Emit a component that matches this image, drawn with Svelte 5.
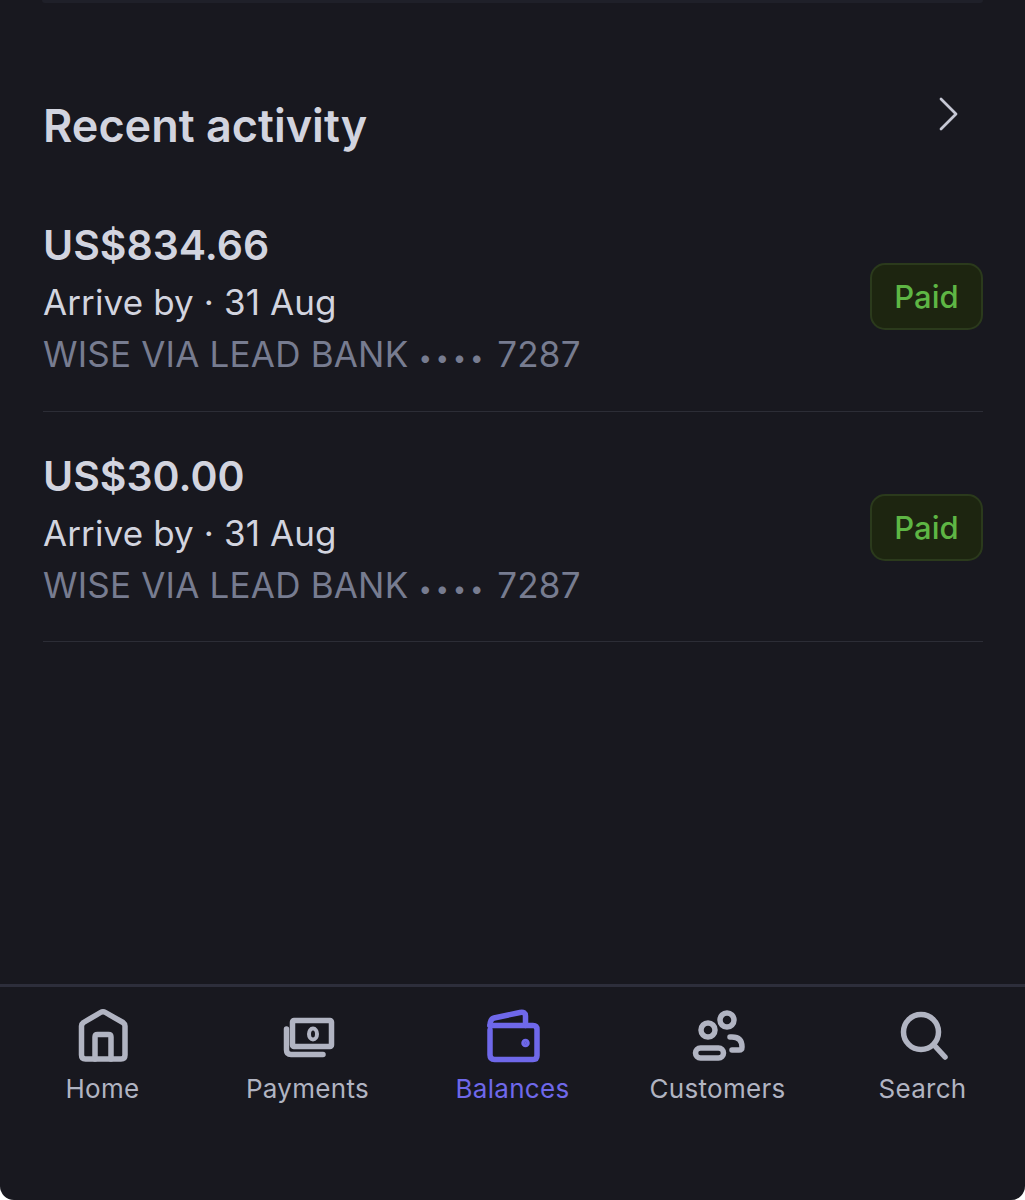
<script>
  const payments = [
    { amount: 'US$834.66', arrive: 'Arrive by · 31 Aug', bank: 'WISE VIA LEAD BANK', last4: '7287', status: 'Paid' },
    { amount: 'US$30.00', arrive: 'Arrive by · 31 Aug', bank: 'WISE VIA LEAD BANK', last4: '7287', status: 'Paid' }
  ];
</script>

<div class="screen">
  <div class="top-card"></div>

  <section class="activity">
    <div class="heading">
      <h2>Recent activity</h2>
      <svg class="chevron" width="24" height="36" viewBox="0 0 24 36" fill="none">
        <path d="M4 3 L19 18 L4 33" stroke="#c5c7d4" stroke-width="2.8" stroke-linecap="round" stroke-linejoin="round" />
      </svg>
    </div>

    {#each payments as p}
      <div class="row">
        <div class="info">
          <div class="amount">{p.amount}</div>
          <div class="arrive">{p.arrive}</div>
          <div class="bank">{p.bank} <span class="dots">••••</span> {p.last4}</div>
        </div>
        <span class="badge">{p.status}</span>
      </div>
    {/each}
  </section>

  <nav class="tabs">
    <div class="tab">
      <svg width="60" height="60" viewBox="0 0 60 60" fill="none">
        <path d="M8.500 20 Q8.500 18 10.500 16.500 L27.500 6.500 Q30 5 32.500 6.500 L50 16.500 Q52 18 52 20 V49 Q52 53 48 53 H12.500 Q8.500 53 8.500 49 Z" />
        <path d="M22 53 V31 Q22 28.500 24.500 28.500 H35.500 Q38 28.500 38 31 V53" />
      </svg>
      <span>Home</span>
    </div>
    <div class="tab">
      <svg width="60" height="60" viewBox="0 0 60 60" fill="none">
        <rect x="14.500" y="14.500" width="39" height="26" rx="1.500" />
        <ellipse class="thin" cx="35" cy="28" rx="4" ry="5.500" />
        <path d="M8.500 23 V44 Q8.500 48.500 13 48.500 H45" />
      </svg>
      <span>Payments</span>
    </div>
    <div class="tab active">
      <svg width="60" height="60" viewBox="0 0 60 60" fill="none">
        <path d="M7 24 V49 Q7 53.500 11.500 53.500 H50 Q54 53.500 54 49.500 V23.500 Q54 19.500 50 19.500 H7" />
        <path d="M7 19.500 Q7 13 11 12 L37 6.500 Q42.500 5.500 42.500 10 V19.500" />
        <circle cx="42.500" cy="37" r="1.500" fill="currentColor" />
      </svg>
      <span>Balances</span>
    </div>
    <div class="tab">
      <svg width="60" height="60" viewBox="0 0 60 60" fill="none">
        <circle cx="39" cy="14" r="7" />
        <circle cx="20" cy="24" r="7" />
        <rect x="7.500" y="42" width="28" height="10" rx="5" />
        <path d="M42 31 H44 Q54 31 54 41 Q54 44 51 44 H44" />
      </svg>
      <span>Customers</span>
    </div>
    <div class="tab">
      <svg width="60" height="60" viewBox="0 0 60 60" fill="none">
        <circle cx="28" cy="26" r="17.500" />
        <path d="M41 39 L52 51" />
      </svg>
      <span>Search</span>
    </div>
  </nav>
</div>

<style>
  :global(body) {
    background: #fff;
  }
  .screen {
    height: 1200px;
    display: flex;
    flex-direction: column;
    background: #18181f;
    border-radius: 0 0 14px 14px;
    overflow: hidden;
    font-family: Inter, "Liberation Sans", sans-serif;
  }
  .top-card {
    height: 3px;
    margin: 0 42px;
    background: #1f2029;
    border-radius: 0 0 10px 10px;
    flex-shrink: 0;
  }
  .activity {
    flex: 1;
    padding: 0 42px 0 43px;
  }
  .heading {
    display: flex;
    justify-content: space-between;
    align-items: flex-start;
    height: 178px;
    padding-top: 95px;
    padding-right: 22px;
    box-sizing: border-box;
  }
  h2 {
    margin: 0;
    font-size: 45px;
    line-height: 56px;
    font-weight: 600;
    color: #d2d4df;
  }
  .chevron {
    margin-top: -2px;
  }
  .row {
    height: 230.500px;
    padding-top: 38px;
    box-sizing: border-box;
    border-bottom: 1px solid #2c2d36;
    display: flex;
    justify-content: space-between;
    align-items: flex-start;
  }
  .amount {
    font-size: 41px;
    line-height: 52px;
    font-weight: 600;
    color: #d2d4df;
  }
  .arrive {
    font-size: 35px;
    line-height: 52px;
    color: #d2d4df;
    margin-top: 5px;
    letter-spacing: 0.12px;
  }
  .bank {
    font-size: 35px;
    line-height: 52px;
    color: #777c90;
    letter-spacing: 0.2px;
  }
  .dots {
    font-size: 24px;
    letter-spacing: 3.7px;
    vertical-align: 1px;
  }
  .badge {
    margin-top: 44px;
    width: 113px;
    height: 67px;
    box-sizing: border-box;
    display: flex;
    align-items: center;
    justify-content: center;
    background: #1d2510;
    border: 2px solid #2b3a1c;
    border-radius: 15px;
    color: #5eb644;
    font-size: 31px;
    font-weight: 500;
  }
  .tabs {
    height: 216px;
    flex-shrink: 0;
    box-sizing: border-box;
    border-top: 3px solid #2d2e3b;
    display: grid;
    grid-template-columns: repeat(5, 1fr);
    padding: 19px 0 0;
  }
  .tab {
    display: flex;
    flex-direction: column;
    align-items: center;
    color: #b1b4c2;
  }
  .tab.active {
    color: #6f68ea;
  }
  .tab svg {
    stroke: currentColor;
    stroke-width: 5.500;
    stroke-linecap: round;
    stroke-linejoin: round;
  }
  .tab svg .thin {
    stroke-width: 4;
  }
  .tab span {
    font-size: 26px;
    line-height: 36px;
    margin-top: 5px;
    letter-spacing: 0.3px;
  }
</style>
